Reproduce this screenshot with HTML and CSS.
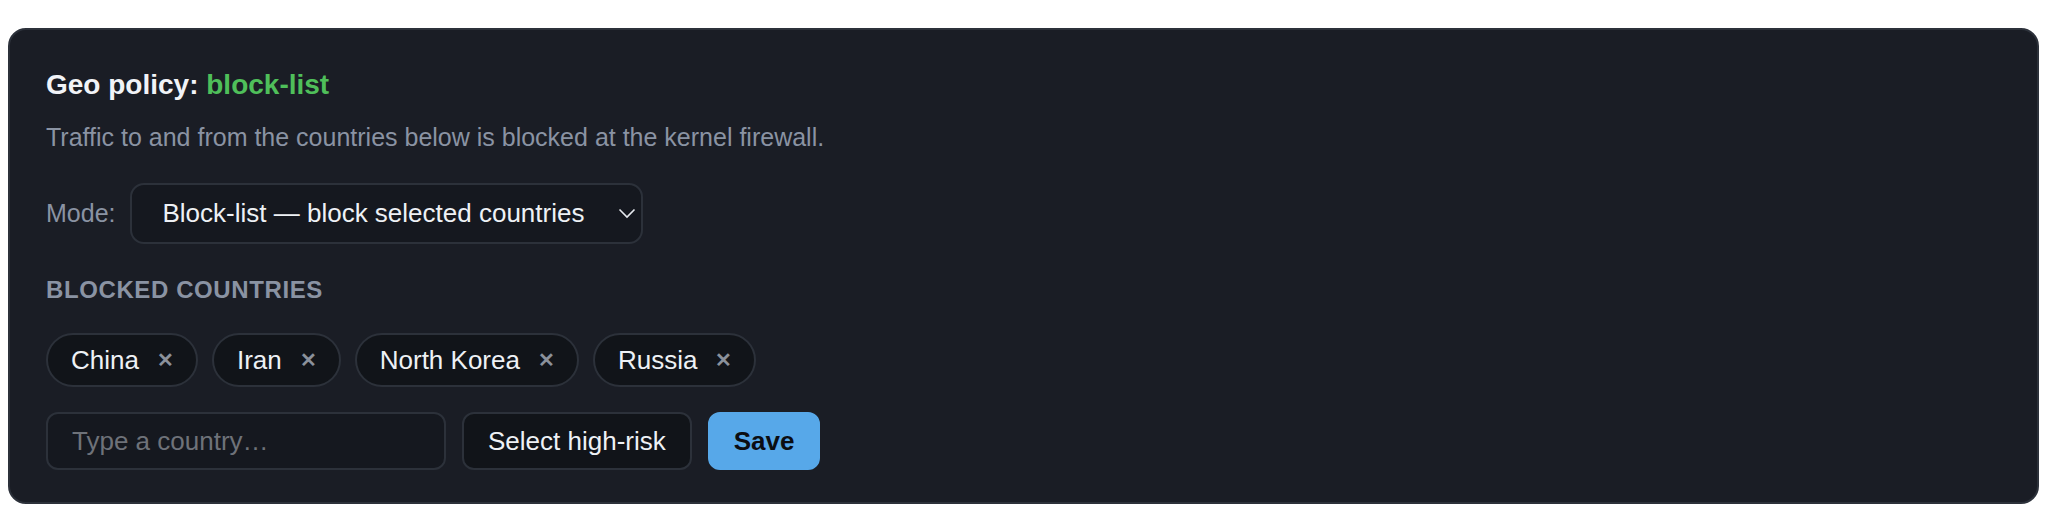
FILE: index.html
```html
<!DOCTYPE html>
<html lang="en">
<head>
<meta charset="utf-8">
<title>Geo policy</title>
<link rel="stylesheet" href="styles.css">
</head>
<body>
<section class="card">
  <h2 class="title">Geo policy: <span class="accent">block-list</span></h2>
  <p class="desc">Traffic to and from the countries below is blocked at the kernel firewall.</p>
  <div class="mode-row">
    <label class="mode-label" for="mode">Mode:</label>
    <div class="select">
      <select id="mode" class="select-native">
        <option>Block-list — block selected countries</option>
        <option>Allow-list — allow selected countries</option>
      </select>
      <svg class="chevron" width="18" height="11" viewBox="0 0 18 11" aria-hidden="true"><path d="M1.5 1.5 L9 9 L16.5 1.5" fill="none" stroke="#e6e9ee" stroke-width="1.6"/></svg>
    </div>
  </div>
  <h3 class="section-label">Blocked countries</h3>
  <div class="chips">
    <span class="chip">China <span class="chip-x">✕</span></span>
    <span class="chip">Iran <span class="chip-x">✕</span></span>
    <span class="chip">North Korea <span class="chip-x">✕</span></span>
    <span class="chip">Russia <span class="chip-x">✕</span></span>
  </div>
  <div class="actions">
    <input class="country-input" type="text" placeholder="Type a country…">
    <button class="btn">Select high-risk</button>
    <button class="btn btn-primary">Save</button>
  </div>
</section>
</body>
</html>
```

FILE: styles.css
```css
html, body {
  background: #ffffff;
}
body {
  margin: 8px;
  font-family: "Liberation Sans", Arial, Helvetica, sans-serif;
}
.card {
  margin: 20px 5px 0 0;
  background: #1a1d25;
  border: 2px solid #2c313a;
  border-radius: 18px;
  padding: 37.5px 36px 32px 36px;
  color: #eef1f5;
}
.title {
  margin: 0;
  font-size: 28px;
  line-height: 34px;
  font-weight: 700;
  color: #f1f3f7;
}
.accent {
  color: #4fbf5a;
}
.desc {
  margin: 18px 0 0 0;
  font-size: 25px;
  line-height: 35px;
  color: #8a93a3;
}
.mode-row {
  display: flex;
  align-items: center;
  gap: 15px;
  margin-top: 28px;
}
.mode-label {
  font-size: 25px;
  color: #8a93a3;
}
.select {
  display: flex;
  align-items: center;
  width: 513px;
  height: 61px;
  box-sizing: border-box;
  border: 2px solid #2c313a;
  border-radius: 14px;
  background: #15181f;
  padding: 0 5px 0 30px;
}
.select-native {
  flex: 1;
  appearance: none;
  -webkit-appearance: none;
  background: transparent;
  border: none;
  outline: none;
  color: #eef1f5;
  font-family: inherit;
  font-size: 26px;
  padding: 0;
  margin: 0;
}
.chevron {
  flex: none;
}
.section-label {
  margin: 32.5px 0 0 0;
  font-size: 24px;
  line-height: 28px;
  font-weight: 700;
  letter-spacing: 0.6px;
  text-transform: uppercase;
  color: #8a93a3;
}
.chips {
  display: flex;
  flex-wrap: wrap;
  gap: 14px;
  margin-top: 29px;
}
.chip {
  display: inline-flex;
  align-items: center;
  gap: 18px;
  height: 54px;
  box-sizing: border-box;
  padding: 0 22px 0 23px;
  border: 2px solid #2c313a;
  border-radius: 27px;
  background: #111419;
  font-size: 26px;
  color: #eef1f5;
}
.chip-x {
  font-size: 20px;
  font-weight: 700;
  color: #8b919b;
}
.actions {
  display: flex;
  gap: 16px;
  margin-top: 25px;
}
.country-input {
  width: 400px;
  height: 58px;
  box-sizing: border-box;
  border: 2px solid #2c313a;
  border-radius: 12px;
  background: #15181f;
  padding: 0 24px;
  font-family: inherit;
  font-size: 26px;
  color: #eef1f5;
  outline: none;
}
.country-input::placeholder {
  color: #6e7279;
}
.btn {
  height: 58px;
  box-sizing: border-box;
  border: 2px solid #2c313a;
  border-radius: 12px;
  background: #111419;
  padding: 0 24px;
  font-family: inherit;
  font-size: 26px;
  color: #eef1f5;
}
.btn-primary {
  background: #57a8e9;
  border-color: #57a8e9;
  color: #0b0d12;
  font-weight: 700;
  padding: 0 24px;
}
```
